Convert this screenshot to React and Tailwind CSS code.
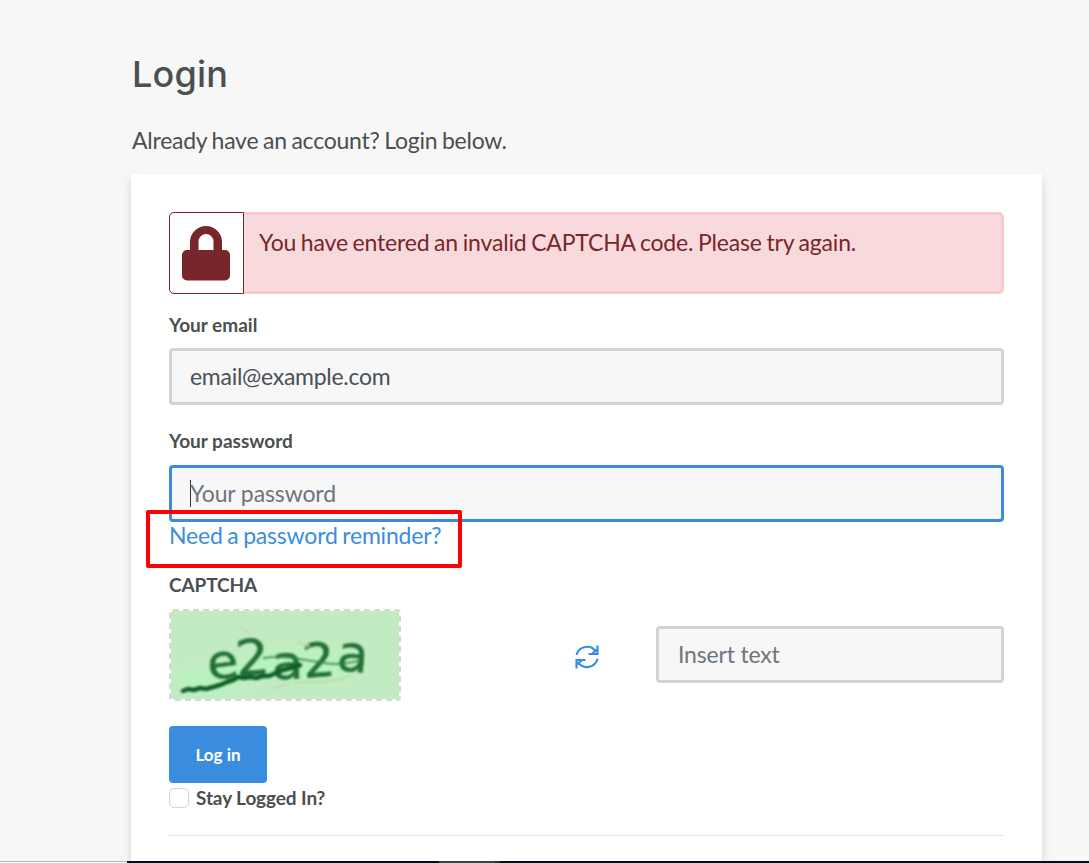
function LockIcon() {
  return (
    <svg viewBox="0 0 48 55" className="mr-px h-[55px] w-12 fill-[#79262b]">
      <path
        fillRule="evenodd"
        d="M8 24V16a16 16 0 0 1 32 0v8h3a5 5 0 0 1 5 5v20.500a5 5 0 0 1-5 5H5a5 5 0 0 1-5-5V29a5 5 0 0 1 5-5zM16.500 24h15v-8.500a7.500 7.500 0 0 0-15 0z"
      />
    </svg>
  );
}

function RefreshIcon() {
  return (
    <svg viewBox="0 0 24 24" className="h-6 w-6 fill-none stroke-[#3a8dde] stroke-[2.100]">
      <path d="M1.500 9.800A10.800 10.800 0 0 1 21 6.800M22.500 .5v8.500H13.500M17.500 8.500L22 4.500" />
      <path d="M22.500 13.800A10.800 10.800 0 0 1 3 17.200M1.500 23.500V15H10.500M6.500 15.500L2 19.500" />
    </svg>
  );
}

function CaptchaImage() {
  return (
    <svg
      viewBox="0 0 228 88"
      className="h-[92px] w-[232px] rounded-[4px] border-2 border-dashed border-[#d4d8d7] bg-[#c3ebc2] bg-clip-padding"
    >
      <defs>
        <filter id="soft">
          <feGaussianBlur stdDeviation="0.8" />
        </filter>
        <filter id="glow" x="-20%" y="-60%" width="140%" height="220%">
          <feGaussianBlur stdDeviation="7" />
        </filter>
      </defs>
      <path d="M8 72C55 70 60 62 90 53S150 65 185 47" stroke="#b8f3bd" strokeWidth="24" fill="none" filter="url(#glow)" />
      <g filter="url(#soft)">
        <g fill="#247039" stroke="#247039" strokeWidth=".6" fontFamily="DejaVu Sans, sans-serif">
          <text transform="translate(38 69) rotate(-7) scale(1.08 1)" fontSize="47">e</text>
          <text transform="translate(66 65) rotate(-5) scale(1.080 1)" fontSize="49">2</text>
          <text transform="translate(101 68) rotate(-1) scale(1.120 1)" fontSize="46">a</text>
          <text transform="translate(133 67) rotate(-5) scale(1.080 1)" fontSize="47">2</text>
          <text transform="translate(165 59) rotate(5) scale(1.020 1)" fontSize="50">a</text>
        </g>
        <path
          d="M12 80L17 78L23 79L29 77L35 78L42 76L49 74L56 71L62 69L67 66L73 67L79 66L85 67L92 65L98 65L105 62L112 59L120 57L129 54"
          stroke="#105f2b"
          strokeWidth="4.500"
          fill="none"
          strokeLinejoin="round"
          strokeLinecap="round"
        />
        <path d="M92 47Q107 45 121 47T153 52T190 49" stroke="#347c45" strokeWidth="1.500" fill="none" />
        <path d="M101 77Q125 70 143 71T181 64M69 16l9 6M126 31l12 4" stroke="#b9dfae" strokeWidth="2" fill="none" />
      </g>
    </svg>
  );
}

const field =
  "block h-[57px] rounded-[4px] border-[3px] bg-[#f7f7f7] px-[18px] pb-[2px] text-[23px] text-[#495057] outline-none placeholder:text-[#6c757d] placeholder:opacity-100";
const label = "block text-[19px] leading-7 font-bold text-[#4a4f50]";

export default function App() {
  return (
    <div className="flex h-[863px] w-[1089px] flex-col overflow-hidden bg-[#f7f7f7] font-['Lato',sans-serif] text-[23px] text-[#4a4f50]">
      <main className="ml-[131px] flex h-[861px] w-[911px] shrink-0 flex-col">
        <h1 className="mt-[50px] ml-px h-12 font-['Inter',sans-serif] text-[36px] leading-[48px] font-[450] tracking-[0.2px]">Login</h1>
        <p className="mt-[25px] ml-px h-[51px] leading-[34px] tracking-[-0.24px] [word-spacing:-1px]">Already have an account? Login below.</p>
        <section className="flex grow flex-col bg-white px-[38px] pt-[38px] shadow-[0_6px_9px_rgba(0,0,0,0.15)]">
          <div className="flex h-[82px] w-[835px] rounded-[5px] border-[3px] border-l-0 border-[#f9cbd0] bg-[#f8dadd] text-[#79262b]">
            <div className="-my-[3px] flex h-[82px] w-[75px] items-center justify-center rounded-l-[5px] border border-[#79262b] bg-white">
              <LockIcon />
            </div>
            <p className="ml-[15px] pt-[10px] leading-[34px] tracking-[-0.18px] [word-spacing:-1px]">
              You have entered an invalid CAPTCHA code. Please try again.
            </p>
          </div>
          <label htmlFor="email" className={`${label} mt-[17px]`}>Your email</label>
          <input id="email" defaultValue="email@example.com" className={`${field} mt-[9px] w-[835px] border-[#d0d5d4] tracking-[-0.28px]`} />
          <label htmlFor="password" className={`${label} mt-[22px]`}>Your password</label>
          <div className={`${field} mt-[10px] w-[835px] border-[#3a8dde]`}>
            <div className="flex h-[51px] items-center">
              <span className="-mr-px h-[27px] w-px bg-[#303538]" />
              <input
                id="password"
                type="password"
                placeholder="Your password"
                className="w-full bg-transparent tracking-[-0.12px] outline-none placeholder:text-[#6c757d] placeholder:opacity-100"
              />
            </div>
          </div>
          <div className="relative h-[49px]">
            <a href="#reminder" className="-mt-px block leading-7 tracking-[-0.2px] text-[#3a8dde] [word-spacing:-1px]">Need a password reminder?</a>
            <span className="pointer-events-none absolute -top-[12px] -left-[23.500px] h-[57.500px] w-[316px] rounded-[2px] border-4 border-[#ff0000]" />
          </div>
          <label htmlFor="code" className={`${label} tracking-[-0.1px]`}>CAPTCHA</label>
          <div className="mt-[10px] flex h-[92px] w-[835px] items-start">
            <CaptchaImage />
            <button aria-label="Refresh" className="mt-9 ml-[173.500px]">
              <RefreshIcon />
            </button>
            <input
              id="code"
              placeholder="Insert text"
              className={`${field} mt-[17px] ml-auto w-[348px] border-[#d0d5d4] pl-[19px] tracking-[-0.18px]`}
            />
          </div>
          <button className="mt-[25px] h-[57px] w-[98px] rounded-[4px] bg-[#3a8dde] text-[17px] font-bold text-white">Log in</button>
          <label className="mt-[1px] flex h-7 items-center gap-[7px] text-[19px] font-bold tracking-[-0.1px]">
            <input type="checkbox" className="h-5 w-5 appearance-none rounded-[5px] border border-[#cfd4d4] bg-white" />
            Stay Logged In?
          </label>
          <hr className="mt-[23px] border-[#e4e5e5]" />
        </section>
      </main>
      <footer className="relative flex h-[2px] shrink-0 bg-[#080c14]">
        <span className="w-[127px] border-t border-[#b8b9b9] bg-[#f7f7f7]" />
        <span className="ml-[312px] w-[56px] bg-[#404147]" />
        <span className="w-[5px] bg-[#292b32]" />
      </footer>
    </div>
  );
}
